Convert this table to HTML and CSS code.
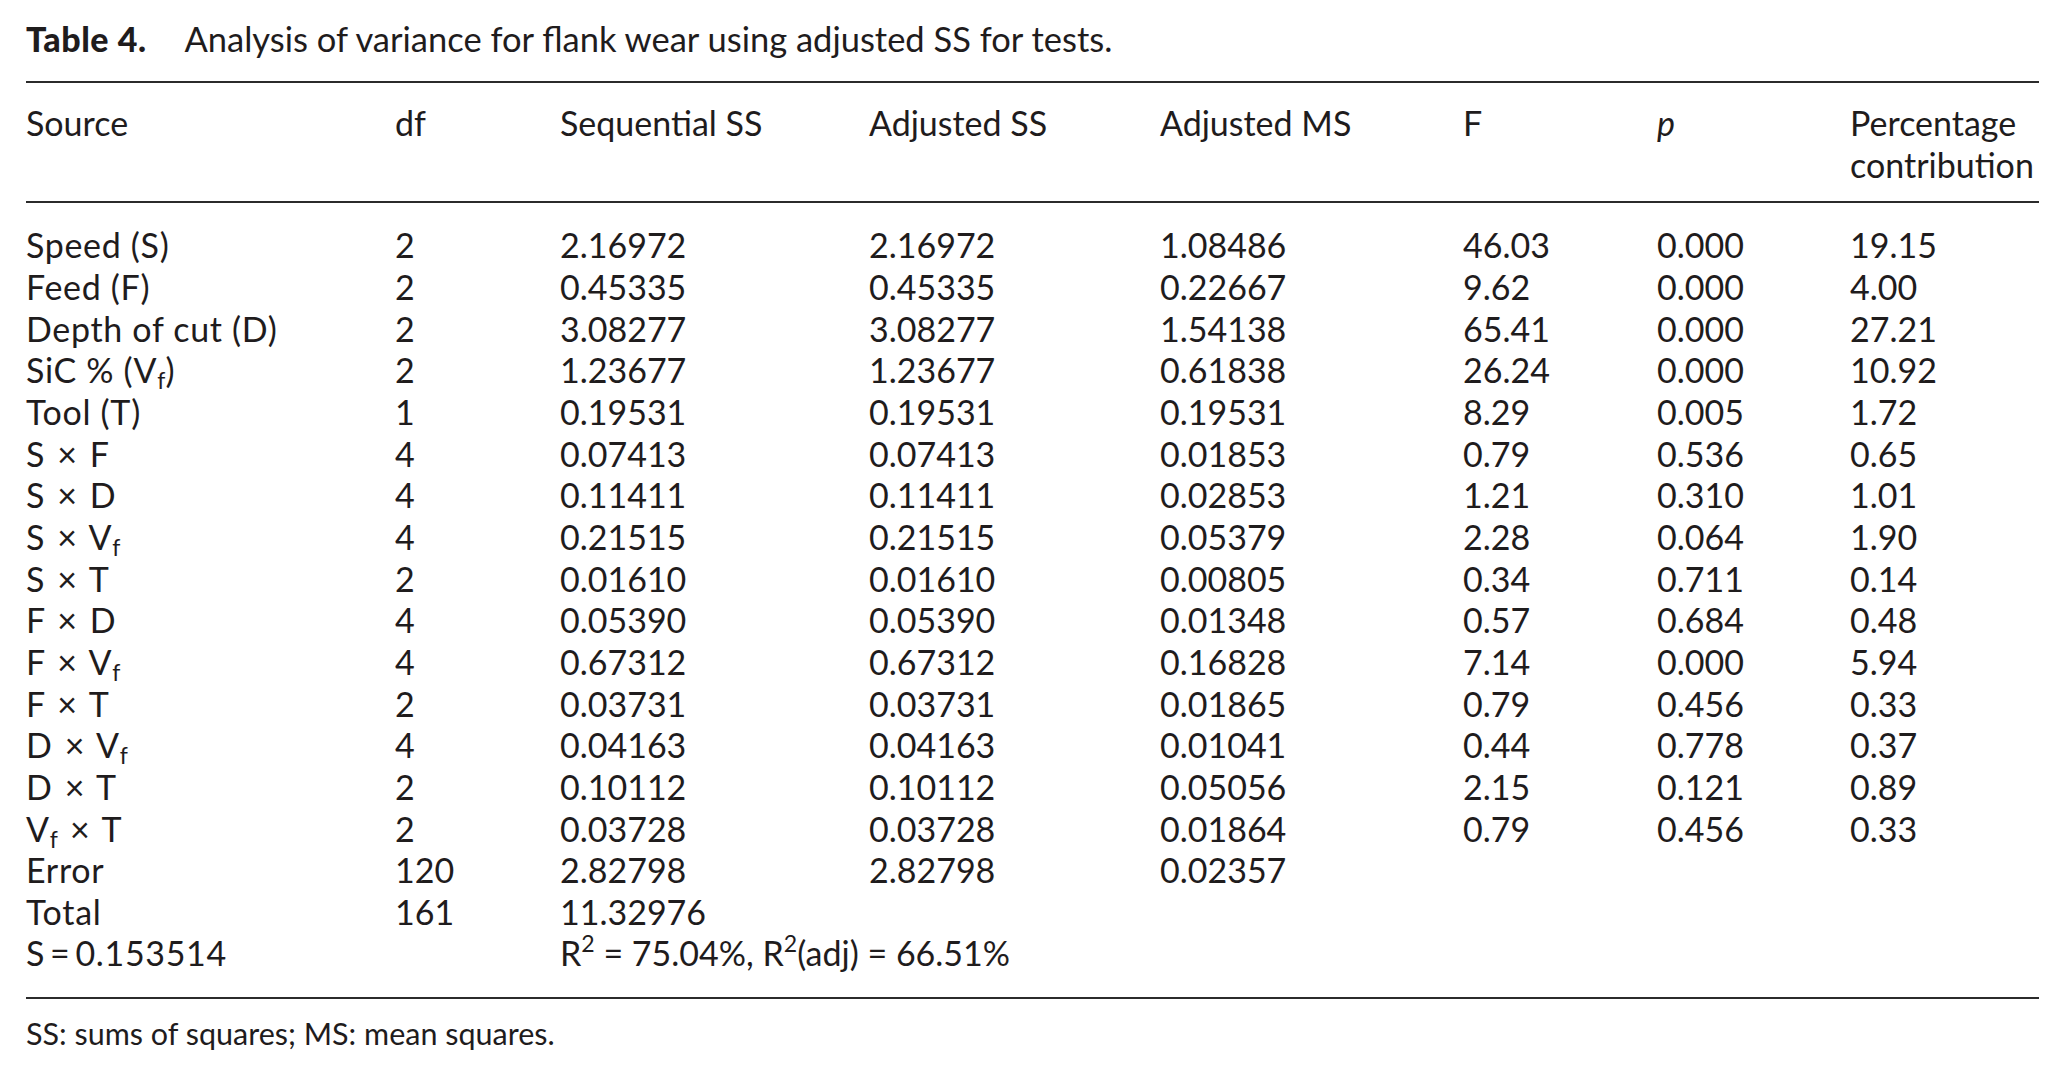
FILE: index.html
```html
<!DOCTYPE html>
<html lang="en">
<head>
<meta charset="utf-8">
<title>Table 4</title>
<link rel="stylesheet" href="styles.css">
</head>
<body>
<div class="page">
  <p class="caption"><b class="cap-label">Table 4.</b><span class="cap-text">Analysis of variance for flank wear using adjusted SS for tests.</span></p>
  <table class="anova">
    <colgroup>
      <col class="c-src"><col class="c-df"><col class="c-seq"><col class="c-adj"><col class="c-ms"><col class="c-f"><col class="c-p"><col class="c-pct">
    </colgroup>
    <thead>
      <tr>
        <th>Source</th><th>df</th><th>Sequential SS</th><th>Adjusted SS</th><th>Adjusted MS</th><th>F</th><th><i>p</i></th><th>Percentage<br>contribution</th>
      </tr>
    </thead>
    <tbody>
      <tr class="first"><td>Speed (S)</td><td>2</td><td>2.16972</td><td>2.16972</td><td>1.08486</td><td>46.03</td><td>0.000</td><td>19.15</td></tr>
      <tr><td>Feed (F)</td><td>2</td><td>0.45335</td><td>0.45335</td><td>0.22667</td><td>9.62</td><td>0.000</td><td>4.00</td></tr>
      <tr><td>Depth of cut (D)</td><td>2</td><td>3.08277</td><td>3.08277</td><td>1.54138</td><td>65.41</td><td>0.000</td><td>27.21</td></tr>
      <tr><td>SiC % (V<sub>f</sub>)</td><td>2</td><td>1.23677</td><td>1.23677</td><td>0.61838</td><td>26.24</td><td>0.000</td><td>10.92</td></tr>
      <tr><td>Tool (T)</td><td>1</td><td>0.19531</td><td>0.19531</td><td>0.19531</td><td>8.29</td><td>0.005</td><td>1.72</td></tr>
      <tr><td class="inter">S × F</td><td>4</td><td>0.07413</td><td>0.07413</td><td>0.01853</td><td>0.79</td><td>0.536</td><td>0.65</td></tr>
      <tr><td class="inter">S × D</td><td>4</td><td>0.11411</td><td>0.11411</td><td>0.02853</td><td>1.21</td><td>0.310</td><td>1.01</td></tr>
      <tr><td class="inter">S × V<sub>f</sub></td><td>4</td><td>0.21515</td><td>0.21515</td><td>0.05379</td><td>2.28</td><td>0.064</td><td>1.90</td></tr>
      <tr><td class="inter">S × T</td><td>2</td><td>0.01610</td><td>0.01610</td><td>0.00805</td><td>0.34</td><td>0.711</td><td>0.14</td></tr>
      <tr><td class="inter">F × D</td><td>4</td><td>0.05390</td><td>0.05390</td><td>0.01348</td><td>0.57</td><td>0.684</td><td>0.48</td></tr>
      <tr><td class="inter">F × V<sub>f</sub></td><td>4</td><td>0.67312</td><td>0.67312</td><td>0.16828</td><td>7.14</td><td>0.000</td><td>5.94</td></tr>
      <tr><td class="inter">F × T</td><td>2</td><td>0.03731</td><td>0.03731</td><td>0.01865</td><td>0.79</td><td>0.456</td><td>0.33</td></tr>
      <tr><td class="inter">D × V<sub>f</sub></td><td>4</td><td>0.04163</td><td>0.04163</td><td>0.01041</td><td>0.44</td><td>0.778</td><td>0.37</td></tr>
      <tr><td class="inter">D × T</td><td>2</td><td>0.10112</td><td>0.10112</td><td>0.05056</td><td>2.15</td><td>0.121</td><td>0.89</td></tr>
      <tr><td class="inter">V<sub>f</sub> × T</td><td>2</td><td>0.03728</td><td>0.03728</td><td>0.01864</td><td>0.79</td><td>0.456</td><td>0.33</td></tr>
      <tr><td>Error</td><td>120</td><td>2.82798</td><td>2.82798</td><td>0.02357</td><td></td><td></td><td></td></tr>
      <tr><td>Total</td><td>161</td><td>11.32976</td><td></td><td></td><td></td><td></td><td></td></tr>
      <tr class="last"><td>S&#8201;=&#8201;0.153514</td><td></td><td colspan="6">R<sup>2</sup> = 75.04%, R<sup>2</sup>(adj) = 66.51%</td></tr>
    </tbody>
  </table>
  <p class="footnote">SS: sums of squares; MS: mean squares.</p>
</div>
</body>
</html>
```
FILE: styles.css
```css
html, body {
  margin: 0;
  padding: 0;
  background: #ffffff;
}

.page {
  padding: 18px 0 0 26px;
  width: 2013px;
  color: #1f1c1d;
  font-family: Lato, "Noto Sans", "Liberation Sans", sans-serif;
}

.caption {
  margin: 0 0 21px 0;
  font-size: 34.5px;
  line-height: 42px;
  white-space: nowrap;
}

.cap-label {
  font-weight: 900;
  font-size: 34px;
  letter-spacing: 0.015em;
  padding-right: 38px;
}

.anova {
  width: 2013px;
  table-layout: fixed;
  border-collapse: collapse;
  font-size: 34px;
  line-height: 41.65px;
}

.c-src { width: 369px; }
.c-df { width: 165px; }
.c-seq { width: 309px; }
.c-adj { width: 291px; }
.c-ms { width: 303px; }
.c-f { width: 194px; }
.c-p { width: 193px; }
.c-pct { width: 189px; }

.anova th,
.anova td {
  padding: 0;
  text-align: left;
  vertical-align: top;
  font-weight: 400;
  white-space: nowrap;
}

.anova tbody td:first-child {
  letter-spacing: 0.02em;
}

.anova tbody td.inter {
  word-spacing: 0.08em;
}

.anova thead tr {
  border-top: 2px solid #2b2b2b;
  border-bottom: 2px solid #2b2b2b;
}

.anova thead th {
  padding-top: 19px;
  padding-bottom: 16px;
}

.anova tbody tr.first td {
  padding-top: 21px;
}

.anova tbody tr.last td {
  padding-bottom: 23px;
}

.anova tbody tr.last {
  border-bottom: 2px solid #2b2b2b;
}

.anova sub {
  font-size: 0.68em;
  line-height: 0;
  vertical-align: -0.24em;
  letter-spacing: 0;
}

.anova sup {
  font-size: 0.68em;
  line-height: 0;
  vertical-align: 0.6em;
}

.footnote {
  margin: 15px 0 0 0;
  font-size: 30.5px;
  line-height: 38px;
}
```
